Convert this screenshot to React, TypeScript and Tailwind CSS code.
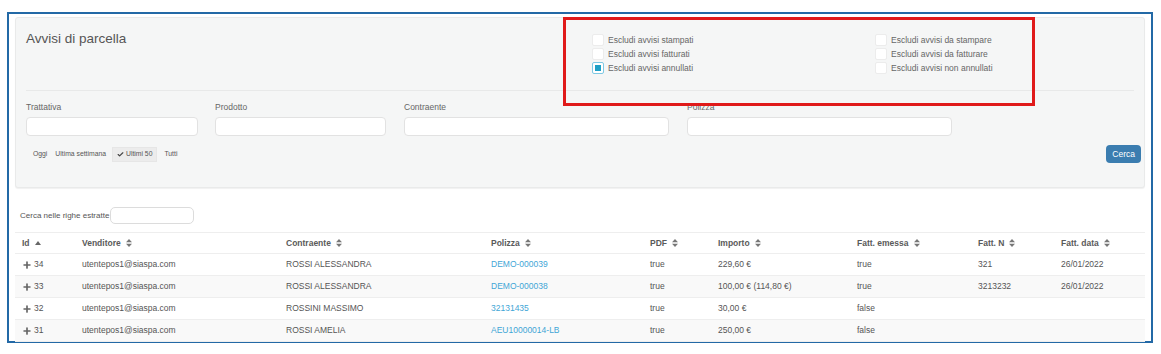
import { Check, Plus } from "lucide-react";

const FONT = "font-['Liberation_Sans',Arial,sans-serif]";

const LEFT_CHECKS = [
  { label: "Escludi avvisi stampati", checked: false },
  { label: "Escludi avvisi fatturati", checked: false },
  { label: "Escludi avvisi annullati", checked: true },
];
const RIGHT_CHECKS = [
  { label: "Escludi avvisi da stampare", checked: false },
  { label: "Escludi avvisi da fatturare", checked: false },
  { label: "Escludi avvisi non annullati", checked: false },
];

const FIELDS = [
  { label: "Trattativa", w: "w-[172px]", ml: "" },
  { label: "Prodotto", w: "w-[171px]", ml: "ml-[17px]" },
  { label: "Contraente", w: "w-[265px]", ml: "ml-[18px]" },
  { label: "Polizza", w: "w-[265px]", ml: "ml-[18px]" },
];

const COLS = [
  "Id",
  "Venditore",
  "Contraente",
  "Polizza",
  "PDF",
  "Importo",
  "Fatt. emessa",
  "Fatt. N",
  "Fatt. data",
];

const ROWS = [
  ["34", "utentepos1@siaspa.com", "ROSSI ALESSANDRA", "DEMO-000039", "true", "229,60 €", "true", "321", "26/01/2022"],
  ["33", "utentepos1@siaspa.com", "ROSSI ALESSANDRA", "DEMO-000038", "true", "100,00 € (114,80 €)", "true", "3213232", "26/01/2022"],
  ["32", "utentepos1@siaspa.com", "ROSSINI MASSIMO", "32131435", "true", "30,00 €", "false", "", ""],
  ["31", "utentepos1@siaspa.com", "ROSSI AMELIA", "AEU10000014-LB", "true", "250,00 €", "false", "", ""],
];

const GRID = "grid grid-cols-[60px_204px_205px_159px_68px_139px_121px_83px_1fr]";

function SortIcon() {
  return (
    <svg width="6" height="8" viewBox="0 0 6 8" className="ml-[5px] inline-block">
      <path d="M3 0 L6 3.2 L0 3.2 Z M3 8 L6 4.8 L0 4.8 Z" fill="#777" />
    </svg>
  );
}

function CheckRow({ label, checked }: { label: string; checked: boolean }) {
  return (
    <div className="flex h-[14px] items-center gap-[4px]">
      <span
        className={
          checked
            ? "flex h-[12px] w-[12px] items-center justify-center rounded-[2px] border border-[#7fc9e4] bg-white"
            : "h-[12px] w-[12px] rounded-[2px] border border-[#ececec] bg-white"
        }
      >
        {checked && <span className="h-[6px] w-[6px] bg-[#1e9fc6]" />}
      </span>
      <span className="text-[8.5px] text-[#666]">{label}</span>
    </div>
  );
}

export default function App() {
  return (
    <div className={`${FONT} h-[354px] w-[1161px] bg-white pl-[7px] pt-[12px]`}>
      <div className="relative h-[331px] w-[1146px] border-2 border-[#2369a6] px-[6px] pt-[3px]">
        {/* filter panel */}
        <div className="h-[171px] rounded-[3px] border border-[#e9eaea] bg-[#f5f6f6] px-[10px] shadow-[0_1px_1px_rgba(0,0,0,0.06)]">
          <div className="flex h-[73px] border-b border-[#e8e9e9]">
            <div className="w-[566px] pt-[11px] text-[13.5px] text-[#555]">Avvisi di parcella</div>
            <div className="flex pt-[15px]">
              <div className="w-[283px]">
                {LEFT_CHECKS.map((c) => (
                  <CheckRow key={c.label} {...c} />
                ))}
              </div>
              <div>
                {RIGHT_CHECKS.map((c) => (
                  <CheckRow key={c.label} {...c} />
                ))}
              </div>
            </div>
          </div>

          <div className="flex pt-[10px]">
            {FIELDS.map((f) => (
              <div key={f.label} className={f.ml}>
                <div className="h-[16px] text-[8.5px] text-[#666]">{f.label}</div>
                <div className={`${f.w} h-[19px] rounded-[4px] border border-[#e2e2e2] bg-white`} />
              </div>
            ))}
          </div>

          <div className="flex items-center justify-between pt-[9px]">
            <div className="flex items-center pl-[7px] text-[6.8px] text-[#555]">
              <span className="pr-[8px]">Oggi</span>
              <span className="pr-[6px]">Ultima settimana</span>
              <span className="flex h-[15px] items-center gap-[2px] border border-[#e6e6e6] bg-[#ececec] px-[4px]">
                <Check size={7} strokeWidth={4} className="text-[#444]" />
                Ultimi 50
              </span>
              <span className="pl-[7px]">Tutti</span>
            </div>
            <button className="mr-[-7px] h-[18px] rounded-[4px] bg-[#3b7db0] px-[6px] text-[8.5px] text-white">
              Cerca
            </button>
          </div>
        </div>

        {/* search in rows */}
        <div className="flex items-center pl-[5px] pt-[19px] text-[8px] text-[#555]">
          <span>Cerca nelle righe estratte</span>
          <div className="ml-px h-[17px] w-[84px] rounded-[5px] border border-[#dcdcdc] bg-white" />
        </div>

        {/* table */}
        <div className="mt-[8px] text-[8.5px] text-[#555]">
          <div className={`${GRID} h-[22px] items-center border-y border-[#eeeeee] font-bold text-[#5a5a5a]`}>
            {COLS.map((c, i) => (
              <div key={c} className="flex items-center pl-[7px]">
                {c}
                {i === 0 ? (
                  <svg width="6" height="4" viewBox="0 0 6 4" className="ml-[5px]">
                    <path d="M3 0 L6 4 L0 4 Z" fill="#666" />
                  </svg>
                ) : (
                  <SortIcon />
                )}
              </div>
            ))}
          </div>
          {ROWS.map((r, ri) => (
            <div
              key={r[0]}
              className={`${GRID} h-[22px] items-center border-b border-[#eeeeee] ${ri % 2 === 1 ? "bg-[#f9f9f9]" : "bg-white"}`}
            >
              {r.map((cell, ci) => (
                <div key={ci} className={`pl-[7px] ${ci === 3 ? "text-[#3fa6d6]" : ""}`}>
                  {ci === 0 ? (
                    <span className="flex items-center gap-[2px]">
                      <Plus size={10} strokeWidth={4} className="text-[#666]" />
                      {cell}
                    </span>
                  ) : (
                    cell
                  )}
                </div>
              ))}
            </div>
          ))}
        </div>

        {/* annotation */}
        <div className="absolute left-[554px] top-[3px] h-[89px] w-[472px] border-[3px] border-[#e01a1a]" />
      </div>
    </div>
  );
}
